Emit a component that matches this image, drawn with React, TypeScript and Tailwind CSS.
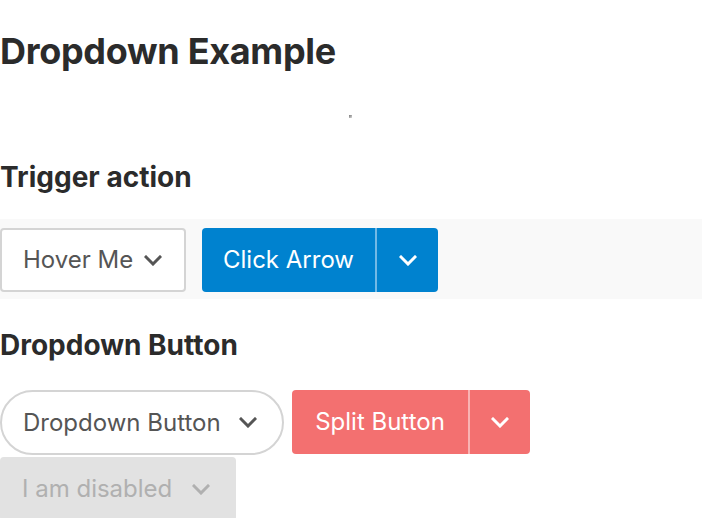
import React from 'react';

const Chevron: React.FC<{ className?: string }> = ({ className }) => (
  <svg viewBox="0 0 18 11" className={className} fill="none" stroke="currentColor" strokeWidth="3" strokeLinecap="square">
    <path d="M2 2l7 7 7-7" />
  </svg>
);

const App: React.FC = () => {
  return (
    <div className="min-h-[518px] bg-white font-['Inter',sans-serif] text-[#2b2b2b] overflow-hidden">
      <h1 className="pt-[29px] text-[36px] font-bold leading-[44px] tracking-[-0.3px]">Dropdown Example</h1>

      {/* stray pixel */}
      <div className="pl-[349px] pt-[42px]">
        <div className="h-[3px] w-[3px] bg-gradient-to-br from-[#777] to-[#ddd]"></div>
      </div>

      <h2 className="mt-[42px] text-[28px] font-bold leading-[34px]">Trigger action</h2>

      {/* Trigger action */}
      <div className="mt-[25px] flex h-[80px] items-start bg-[#f9f9f9] pt-[9px]">
        <button className="flex h-[64px] w-[186px] items-center rounded-[4px] border-2 border-[#d4d4d4] bg-white pl-[21px] text-[24px] text-[#555]">
          Hover Me
          <Chevron className="ml-[11px] h-[11px] w-[18px]" />
        </button>
        <div className="ml-[16px] flex h-[64px] overflow-hidden rounded-[4px] bg-[#0082cf] text-white">
          <button className="flex w-[173px] items-center justify-center text-[24px]">Click Arrow</button>
          <div className="w-[2px] bg-[#72b9e6]"></div>
          <button className="flex w-[61px] items-center justify-center">
            <Chevron className="h-[11px] w-[18px]" />
          </button>
        </div>
      </div>

      <h2 className="mt-[29px] text-[28px] font-bold leading-[34px]">Dropdown Button</h2>

      {/* Dropdown Button */}
      <div className="mt-[28px] flex flex-wrap items-start">
        <button className="flex h-[65px] w-[284px] items-center rounded-full border-2 border-[#d4d4d4] bg-white pl-[21px] text-[24px] text-[#555]">
          Dropdown Button
          <Chevron className="ml-[18px] h-[11px] w-[18px]" />
        </button>
        <div className="ml-[8px] flex h-[64px] overflow-hidden rounded-[4px] bg-[#f37070] text-white">
          <button className="flex w-[176px] items-center justify-center text-[24px]">Split Button</button>
          <div className="w-[2px] bg-[#f9b3b3]"></div>
          <button className="flex w-[60px] items-center justify-center">
            <Chevron className="h-[11px] w-[18px]" />
          </button>
        </div>
        <button disabled className="mt-[2px] flex h-[64px] w-[236px] items-center rounded-[4px] bg-[#e2e2e2] pl-[22px] text-[24px] text-[#b0b0b0]">
          I am disabled
          <Chevron className="ml-[20px] h-[11px] w-[18px]" />
        </button>
      </div>
    </div>
  );
};

export default App;
